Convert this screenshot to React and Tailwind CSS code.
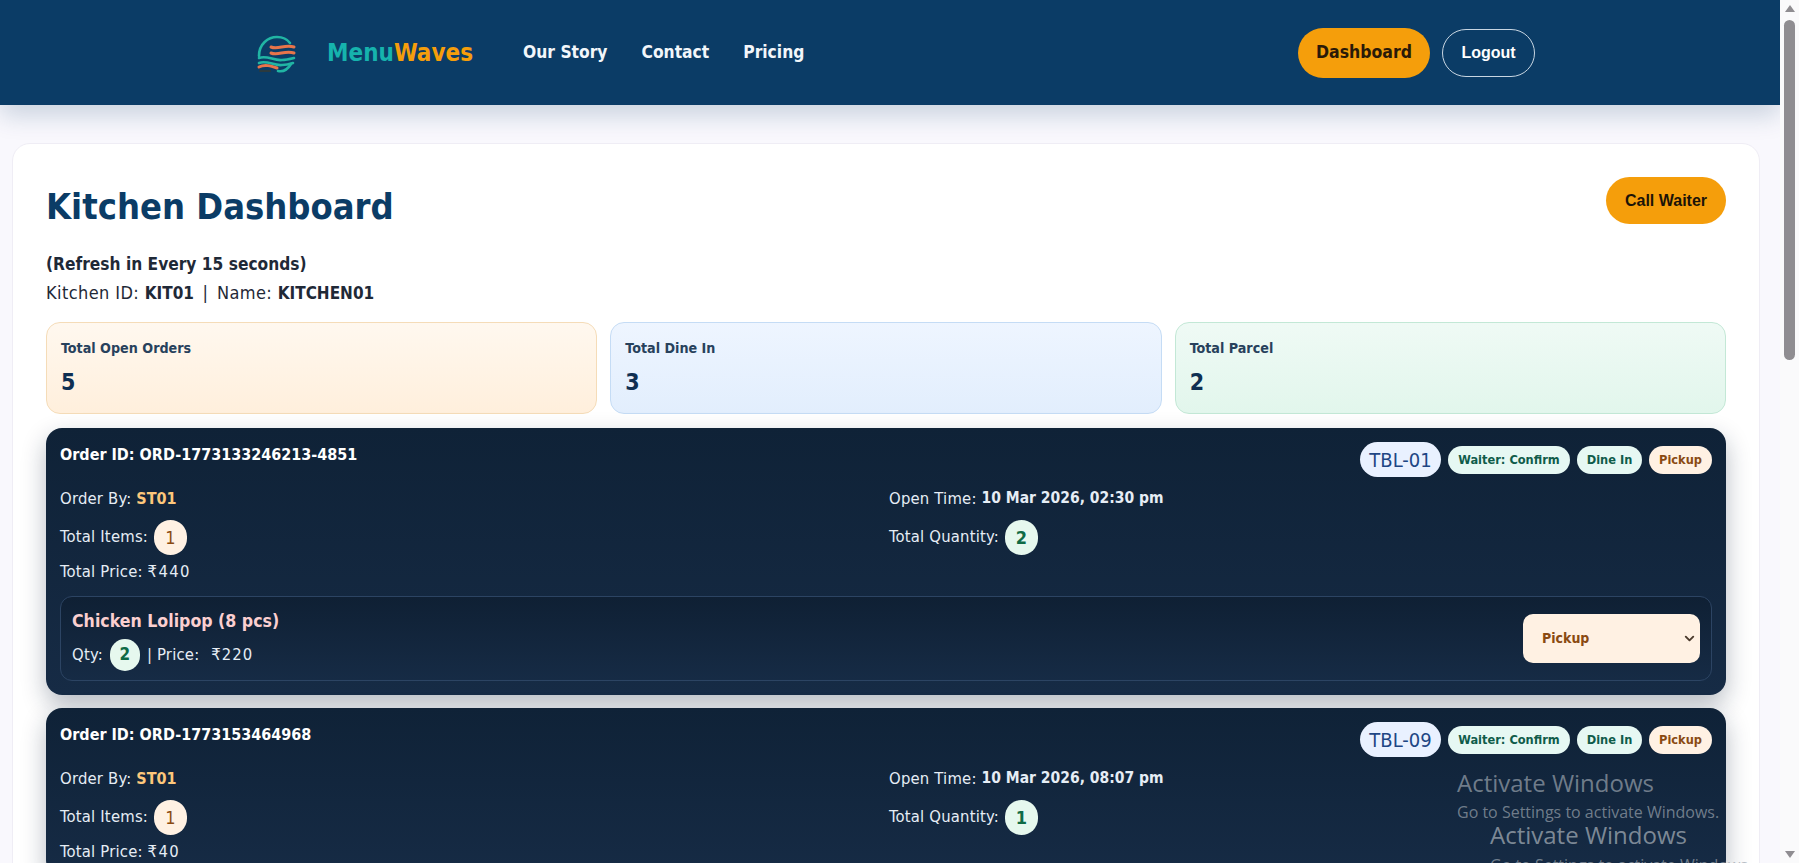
import { ChevronDown } from "lucide-react";

const font = { fontFamily: '"DejaVu Sans Condensed", "DejaVu Sans", sans-serif', fontStretch: "condensed" };
const arial = { fontFamily: '"Liberation Sans", sans-serif', fontStretch: "normal" };
const win = { fontFamily: '"Open Sans", sans-serif', fontStretch: "normal" };

const Pill = ({ children, big, tone, w }) => {
   if (big) {
      return (
         <span className="h-[35px] w-[81px] flex items-center justify-center rounded-full bg-[#e9f1ff] text-[#1e4684] text-[20px]">
            {children}
         </span>
      );
   }
   return (
      <span className={`h-[28px] ${w} flex items-center justify-center rounded-full text-[12.7px] font-semibold ${tone === "green" ? "bg-[#e6f8f3] text-[#0f5c4a]" : "bg-[#fff1e3] text-[#8a4a12]"}`}>
         {children}
      </span>
   );
};

const Count = ({ value, tone }) => (
   <span className={`inline-flex items-center justify-center h-[35px] w-[33px] rounded-full text-[18px] ${tone === "green" ? "bg-[#e6f8ee] text-[#0f6b45] font-bold" : "bg-[#fff1e3] text-[#8a4a12]"}`}>
      {value}
   </span>
);

const OrderCard = ({ id, table, items, qty, total, time, children }) => (
   <div className="rounded-[16px] bg-gradient-to-b from-[#0f2237] to-[#162b45] px-[14px] pt-[14px] pb-[14px] text-[#e6edf5] text-[16.5px] tracking-[0.2px] shadow-[0_10px_24px_rgba(15,33,56,0.3)]">
      <div className="flex justify-between items-start">
         <div className="font-bold text-white pt-[1px] text-[16px] tracking-normal">Order ID: {id}</div>
         <div className="flex items-center gap-[7px] tracking-normal">
            <Pill big>{table}</Pill>
            <Pill tone="green" w="w-[122px]">Waiter: Confirm</Pill>
            <Pill tone="green" w="w-[65px]">Dine In</Pill>
            <Pill w="w-[63px]">Pickup</Pill>
         </div>
      </div>
      <div className="grid grid-cols-2 gap-x-[6px] mt-[10px]">
         <div className="h-[24px] flex items-center">Order By:&nbsp;<span className="text-[#fdc77b] font-bold text-[16px] tracking-normal">ST01</span></div>
         <div className="h-[24px] flex items-center">Open Time:&nbsp;<span className="font-semibold text-[#e6edf5] text-[15.5px] tracking-normal">{time}</span></div>
         <div className="h-[52px] flex items-center gap-[6px]">Total Items: <Count value={items} /></div>
         <div className="h-[52px] flex items-center gap-[6px]">Total Quantity: <Count value={qty} tone="green" /></div>
         <div className="h-[19px] flex items-center col-span-2">Total Price:&nbsp;<span className="tracking-[1.4px]">{total}</span></div>
      </div>
      {children}
   </div>
);

const StatCard = ({ label, value, cls }) => (
   <div className={`h-[92px] rounded-[14px] border px-[14px] pt-[15px] ${cls}`}>
      <div className="text-[14.2px] font-bold text-[#27415c] leading-[20px]">{label}</div>
      <div className="text-[23px] font-bold text-[#0f2f52] leading-[28px] mt-[10px]">{value}</div>
   </div>
);

const Logo = () => (
   <svg width="50" height="50" viewBox="0 0 50 50" fill="none" strokeLinecap="round" strokeWidth="2.6">
      <path d="M9 28 C9 16 18 9 27 9 C32 9 37 11 40 15" stroke="#21b5a4" />
      <path d="M21 19 C28 22 35 16 44 19" stroke="#e8744a" strokeWidth="3" />
      <path d="M21 25 C28 28 35 22 44 25" stroke="#e8744a" strokeWidth="3" />
      <path d="M9 30 C17 27 24 33 32 32 C36 32 40 31 44 30" stroke="#21b5a4" />
      <path d="M9 35 C17 32 24 38 32 37 C36 37 40 36 43 35" stroke="#21b5a4" />
      <path d="M9 39 C15 36 21 38 27 40" stroke="#e8744a" strokeWidth="3" />
      <path d="M28 43 C33 44 38 41 41 36" stroke="#21b5a4" />
      <path d="M10 43 L20 43" stroke="#2b3a3f" strokeWidth="2" />
   </svg>
);

const Scrollbar = () => (
   <div className="w-[19px] shrink-0 bg-[#fafafb] flex flex-col items-center pt-[5px] pb-[5px]">
      <div className="w-0 h-0 border-x-[5px] border-x-transparent border-b-[7px] border-b-[#8f8d91]" />
      <div className="w-[11px] h-[340px] mt-[8px] rounded-full bg-[#8f8d91]" />
      <div className="flex-1" />
      <div className="w-0 h-0 border-x-[5px] border-x-transparent border-t-[7px] border-t-[#8f8d91]" />
   </div>
);

export default function App() {
   return (
      <div className="h-[863px] w-[1799px] flex overflow-hidden relative bg-[#f9f8fd]" style={font}>
         <div className="w-[1780px] shrink-0 overflow-hidden">
            <nav className="h-[105px] bg-[#0b3c66] flex items-center justify-between pl-[250px] pr-[245px] shadow-[0_10px_24px_rgba(11,60,102,0.2)] relative">
               <div className="flex items-center">
                  <Logo />
                  <div className="ml-[27px] text-[24px] font-bold">
                     <span className="text-[#16b3ad]">Menu</span><span className="text-[#f59e0b]">Waves</span>
                  </div>
                  <div className="flex gap-[34px] ml-[50px] text-[17.3px] font-bold text-[#f2f6fa]">
                     <span>Our Story</span>
                     <span>Contact</span>
                     <span>Pricing</span>
                  </div>
               </div>
               <div className="flex items-center gap-[12px]">
                  <div className="h-[50px] w-[132px] flex items-center justify-center rounded-full bg-[#f59e0b] text-[#2a1a08] text-[17.5px] font-bold">Dashboard</div>
                  <div className="h-[48px] w-[93px] flex items-center justify-center rounded-full border border-[#c8d6e2] text-white text-[16px] font-bold" style={arial}>Logout</div>
               </div>
            </nav>

            <main className="mt-[38px] ml-[12px] mr-[20px] h-[800px] rounded-[18px] bg-white border border-[#efedf5] px-[33px] pt-[33px]">
               <div className="flex justify-between items-start h-[71px]">
                  <h1 className="text-[36px] font-bold text-[#0b3c66] leading-[48px] mt-[6px]">Kitchen Dashboard</h1>
                  <div className="h-[47px] w-[120px] flex items-center justify-center rounded-full bg-[#f59e0b] text-[#1c1408] text-[16px] font-bold" style={arial}>Call Waiter</div>
               </div>
               <div className="text-[17.2px] font-bold text-[#1f2937] leading-[26px] mt-[3px]">(Refresh in Every 15 seconds)</div>
               <div className="text-[18px] tracking-[0.4px] text-[#1f2937] leading-[26px] mt-[3px]">Kitchen ID: <span className="font-semibold text-[17px] tracking-normal">KIT01</span><span className="mx-[3px]"> | </span>Name: <span className="font-semibold text-[17px] tracking-normal">KITCHEN01</span></div>

               <div className="grid grid-cols-3 gap-[13px] mt-[16px]">
                  <StatCard label="Total Open Orders" value="5" cls="bg-gradient-to-b from-[#fff8ef] to-[#ffefdc] border-[#f5dcb8]" />
                  <StatCard label="Total Dine In" value="3" cls="bg-gradient-to-b from-[#eef5ff] to-[#e2eefd] border-[#c5dcf5]" />
                  <StatCard label="Total Parcel" value="2" cls="bg-gradient-to-b from-[#effaf5] to-[#e2f6ec] border-[#c3e8d6]" />
               </div>

               <div className="flex flex-col gap-[13px] mt-[14px]">
                  <OrderCard id="ORD-1773133246213-4851" table="TBL-01" items="1" qty="2" total="₹440" time="10 Mar 2026, 02:30 pm">
                     <div className="mt-[14px] h-[85px] rounded-[12px] border border-[#2c4463] bg-gradient-to-b from-[#0f2034] to-[#162b45] px-[11px] flex items-center justify-between">
                        <div className="self-start pt-[12px]">
                           <div className="text-[17.6px] tracking-normal font-semibold text-[#fbcfd0] leading-[24px]">Chicken Lolipop (8 pcs)</div>
                           <div className="flex items-center gap-[7px] mt-[6px] h-[32px]">Qty: <span className="inline-flex items-center justify-center h-[32px] w-[30px] rounded-full bg-[#e6f8ee] text-[#0f6b45] text-[17px] font-bold">2</span> | Price:&nbsp;<span className="tracking-[1px]">₹220</span></div>
                        </div>
                        <div className="h-[49px] w-[177px] rounded-[10px] bg-[#fff1e3] text-[#8a4a12] font-semibold text-[14px] tracking-normal flex items-center justify-between pl-[19px] pr-[3px]">
                           Pickup
                           <ChevronDown size={15} strokeWidth={3} className="text-[#4a3a2c]" />
                        </div>
                     </div>
                  </OrderCard>
                  <OrderCard id="ORD-1773153464968" table="TBL-09" items="1" qty="1" total="₹40" time="10 Mar 2026, 08:07 pm" />
               </div>
            </main>
         </div>
         <Scrollbar />

         <div className="absolute left-[1457px] top-[766px] text-[24px] leading-[34px] text-[#9aa3ad]/70" style={win}>Activate Windows</div>
         <div className="absolute left-[1457px] top-[800px] text-[16px] leading-[24px] text-[#9aa3ad]/70" style={win}>Go to Settings to activate Windows.</div>
         <div className="absolute left-[1490px] top-[818px] text-[24px] leading-[34px] text-[#9aa3ad]/80" style={win}>Activate Windows</div>
         <div className="absolute left-[1490px] top-[853px] text-[16px] leading-[24px] text-[#9aa3ad]/70" style={win}>Go to Settings to activate Windows</div>
      </div>
   );
}
